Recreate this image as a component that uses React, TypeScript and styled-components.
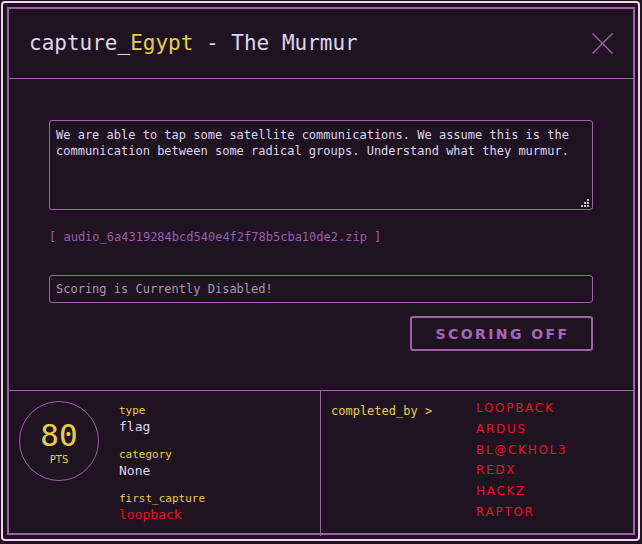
import React from 'react'
import styled, { createGlobalStyle } from 'styled-components'

const BG = '#201321'
const PURPLE = '#a25fab'
const LIGHT = '#f2d2ee'
const YELLOW = '#e6cf45'
const TEXT = '#dcd6f2'
const RED = '#ea1020'
const MONO = `"DejaVu Sans Mono", "Liberation Mono", monospace`
const WIDE = `"DejaVu Sans", "Liberation Sans", sans-serif`

const GlobalStyle = createGlobalStyle`
  html, body {
    margin: 0;
    padding: 0;
    background: ${BG};
  }
  * {
    box-sizing: border-box;
  }
`

const Frame = styled.div`
  margin: 1px 0 0 1px;
  width: 639px;
  height: 540px;
  border: 2px solid ${LIGHT};
  border-radius: 4px;
  padding: 4px 3px 4px 4px;
`

const Modal = styled.div`
  height: 100%;
  border: 2px solid ${PURPLE};
  display: flex;
  flex-direction: column;
  font-family: ${MONO};
`

const Header = styled.header`
  height: 70px;
  flex: none;
  display: flex;
  align-items: center;
  justify-content: space-between;
  padding: 0 20px 1px 20px;
  border-bottom: 1px solid ${PURPLE};
`

const Title = styled.h1`
  margin: 0;
  font-family: ${MONO};
  font-weight: normal;
  font-size: 21px;
  color: ${TEXT};
  white-space: pre;
`

const Accent = styled.span`
  color: ${YELLOW};
`

const Close = styled.button`
  width: 21px;
  height: 21px;
  padding: 0;
  border: none;
  background: none;
  margin-top: 1px;
  display: flex;
`

const Body = styled.section`
  flex: 1;
  display: flex;
  flex-direction: column;
  padding: 41px 40px 0 40px;
  border-bottom: 1px solid ${PURPLE};
`

const DescriptionBox = styled.div`
  position: relative;
  height: 90px;
`

const Description = styled.textarea`
  display: block;
  height: 100%;
  width: 100%;
  margin: 0;
  padding: 6px 6px;
  background: transparent;
  border: 1px solid ${PURPLE};
  border-radius: 3px;
  color: ${TEXT};
  font-family: ${MONO};
  font-size: 12px;
  line-height: 16px;
  outline: none;
  resize: none;
`

const Grip = styled.svg`
  position: absolute;
  right: 4px;
  bottom: 3px;
  pointer-events: none;
`

const FileLink = styled.a`
  margin-top: 20px;
  font-size: 12px;
  line-height: 14px;
  color: #9a5eb0;
  text-decoration: none;
  white-space: pre;
`

const FlagInput = styled.input`
  margin-top: 31px;
  height: 28px;
  width: 100%;
  padding: 0 6px;
  background: transparent;
  border: 1px solid ${PURPLE};
  border-radius: 3px;
  font-family: ${MONO};
  font-size: 12px;
  color: ${TEXT};
  outline: none;

  &::placeholder {
    color: #a39aaa;
  }
`

const Actions = styled.div`
  display: flex;
  justify-content: flex-end;
  margin-top: 13px;
`

const ScoreButton = styled.button`
  width: 183px;
  height: 35px;
  border: 2px solid ${PURPLE};
  border-radius: 3px;
  background: transparent;
  color: #a468b8;
  font-family: ${WIDE};
  font-weight: bold;
  font-size: 14px;
  letter-spacing: 2.4px;
  padding: 0 0 0 2px;
`

const Footer = styled.footer`
  height: 142px;
  flex: none;
  display: grid;
  grid-template-columns: 312px 1fr;
`

const Stats = styled.div`
  display: flex;
  gap: 20px;
  padding: 10px 0 0 10px;
  border-right: 1px solid ${PURPLE};
`

const Points = styled.div`
  width: 80px;
  height: 80px;
  flex: none;
  border: 1px solid ${PURPLE};
  border-radius: 50%;
  display: flex;
  flex-direction: column;
  align-items: center;
  justify-content: center;
  color: ${YELLOW};
`

const PointsValue = styled.span`
  font-family: ${MONO};
  font-size: 31px;
  line-height: 30px;
  margin-top: 2px;
`

const PointsUnit = styled.span`
  font-family: ${WIDE};
  font-size: 10px;
  margin-top: 4px;
`

const Fields = styled.dl`
  margin: 3px 0 0;
  display: flex;
  flex-direction: column;
`

const Label = styled.dt`
  font-size: 11px;
  line-height: 13px;
  color: ${YELLOW};
`

const Value = styled.dd<{ $accent?: boolean }>`
  margin: 2px 0 13px;
  font-size: 13px;
  line-height: 16px;
  color: ${({ $accent }) => ($accent ? RED : TEXT)};
`

const Solvers = styled.div`
  display: flex;
  padding: 10px 0 0 10px;
`

const SolversLabel = styled.span`
  width: 145px;
  font-size: 12px;
  line-height: 20px;
  color: ${YELLOW};
`

const SolverList = styled.ul`
  margin: 0;
  padding: 0;
  list-style: none;
  display: flex;
  flex-direction: column;
  margin-top: -3px;
`

const Solver = styled.li`
  font-family: ${WIDE};
  font-size: 12px;
  line-height: 20.8px;
  letter-spacing: 1.7px;
  color: ${RED};
`

const solvers = ['LOOPBACK', 'ARDUS', 'BL@CKHOL3', 'REDX', 'HACKZ', 'RAPTOR']

export default function App() {
  return (
    <>
      <GlobalStyle />
      <Frame>
        <Modal>
          <Header>
            <Title>
              capture_<Accent>Egypt</Accent> - The Murmur
            </Title>
            <Close aria-label="close">
              <svg width="21" height="21" viewBox="0 0 21 21">
                <path d="M0.5 0.5 L20.5 20.5 M20.5 0.5 L0.5 20.5" stroke={PURPLE} strokeWidth="1.4" fill="none" />
              </svg>
            </Close>
          </Header>
          <Body>
            <DescriptionBox>
              <Description
                readOnly
                value="We are able to tap some satellite communications. We assume this is the communication between some radical groups. Understand what they murmur."
              />
              <Grip width="8" height="8" viewBox="0 0 8 8">
                <g fill="#c9c4cc">
                  <rect x="6" y="0" width="2" height="2" />
                  <rect x="3" y="3" width="2" height="2" />
                  <rect x="6" y="3" width="2" height="2" />
                  <rect x="0" y="6" width="2" height="2" />
                  <rect x="3" y="6" width="2" height="2" />
                  <rect x="6" y="6" width="2" height="2" />
                </g>
              </Grip>
            </DescriptionBox>
            <FileLink href="#">[ audio_6a4319284bcd540e4f2f78b5cba10de2.zip ]</FileLink>
            <FlagInput placeholder="Scoring is Currently Disabled!" disabled />
            <Actions>
              <ScoreButton>SCORING OFF</ScoreButton>
            </Actions>
          </Body>
          <Footer>
            <Stats>
              <Points>
                <PointsValue>80</PointsValue>
                <PointsUnit>PTS</PointsUnit>
              </Points>
              <Fields>
                <Label>type</Label>
                <Value>flag</Value>
                <Label>category</Label>
                <Value>None</Value>
                <Label>first_capture</Label>
                <Value $accent>loopback</Value>
              </Fields>
            </Stats>
            <Solvers>
              <SolversLabel>completed_by &gt;</SolversLabel>
              <SolverList>
                {solvers.map((name) => (
                  <Solver key={name}>{name}</Solver>
                ))}
              </SolverList>
            </Solvers>
          </Footer>
        </Modal>
      </Frame>
    </>
  )
}
